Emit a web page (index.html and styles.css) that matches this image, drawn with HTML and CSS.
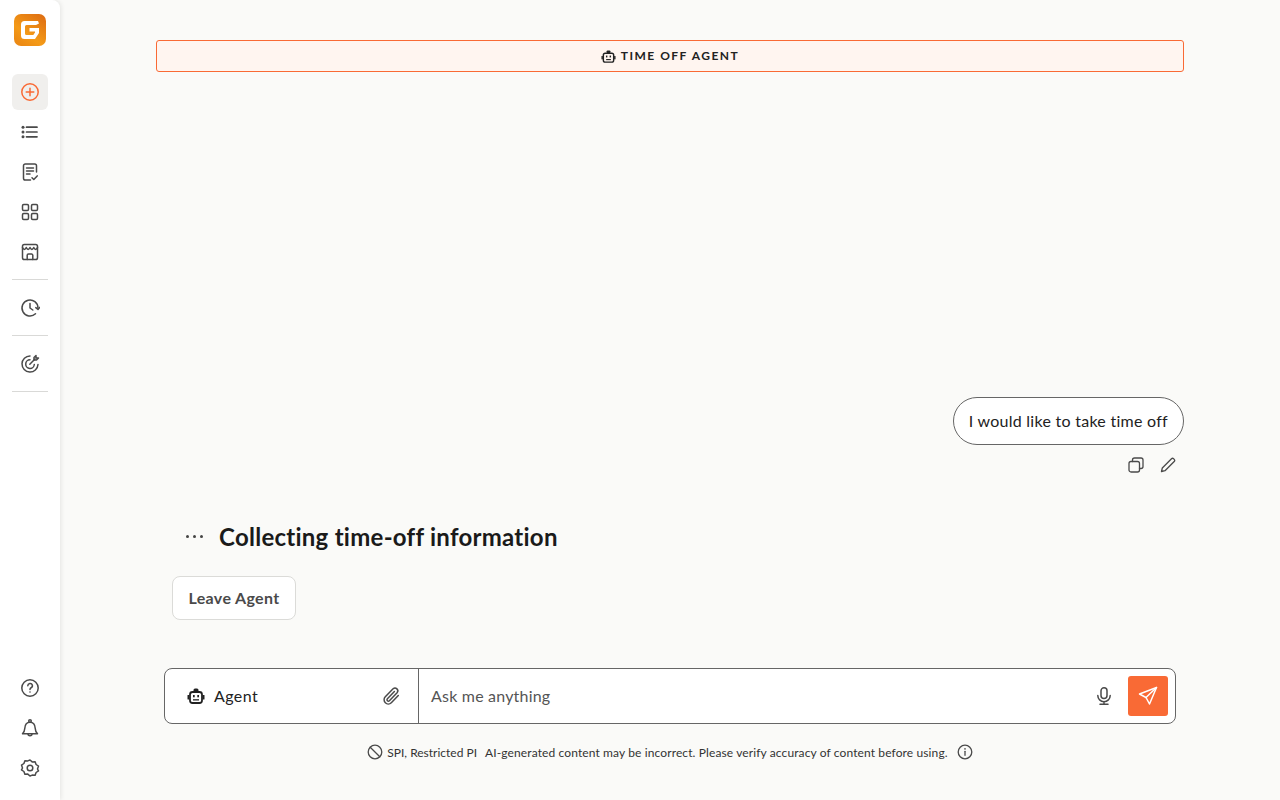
FILE: index.html
```html
<!DOCTYPE html>
<html lang="en">
<head>
<meta charset="utf-8">
<title>Time Off Agent</title>
<link rel="stylesheet" href="styles.css">
</head>
<body>
<div class="app">
  <aside class="sidebar">
    <div class="logo">
      <svg viewBox="0 0 32 32" width="32" height="32">
        <defs><linearGradient id="lg" x1="1" y1="0" x2="0.3" y2="1"><stop offset="0" stop-color="#dc6a12"/><stop offset="0.7" stop-color="#f49a17"/><stop offset="1" stop-color="#ec8a14"/></linearGradient></defs>
        <rect width="32" height="32" rx="7" fill="url(#lg)"/>
        <path d="M25 9.500L24 7H10.500Q7 7 7 10.500V21.500Q7 25 10.500 25H21L25 19V14H15.500V17.500H21V18.500L19.300 21H12.500Q11 21 11 19.500V12.500Q11 11 12.500 11H22Z" fill="#fff"/>
      </svg>
    </div>
    <nav class="nav">
      <a class="nav-item active"><svg class="ico orange" viewBox="0 0 20 20"><circle cx="10" cy="10" r="8.200"/><path d="M10 6.200v7.600M6.200 10h7.600"/></svg></a>
      <a class="nav-item"><svg class="ico" viewBox="0 0 20 20"><path d="M6.500 5.200h10.500M6.500 10h10.500M6.500 14.800h10.500" stroke-width="1.700"/><circle class="dot" cx="3" cy="5.200" r="1.500"/><circle class="dot" cx="3" cy="10" r="1.500"/><circle class="dot" cx="3" cy="14.800" r="1.500"/></svg></a>
      <a class="nav-item"><svg class="ico" viewBox="0 0 20 20"><path d="M16.500 10V3.800A1.800 1.800 0 0 0 14.700 2H5.300a1.800 1.800 0 0 0-1.800 1.800v12.400A1.800 1.800 0 0 0 5.300 18h5.200"/><path d="M6.500 6h7M6.500 9h7M6.500 12h3.500"/><path d="M12 15.700l1.800 1.800 3.400-3.600"/></svg></a>
      <a class="nav-item"><svg class="ico" viewBox="0 0 20 20"><rect x="2.500" y="2.500" width="6" height="6" rx="1.200"/><rect x="11.500" y="2.500" width="6" height="6" rx="1.200"/><rect x="2.500" y="11.500" width="6" height="6" rx="1.200"/><rect x="11.500" y="11.500" width="6" height="6" rx="1.200"/></svg></a>
      <a class="nav-item"><svg class="ico" viewBox="0 0 20 20"><rect x="2.500" y="2.500" width="15" height="15" rx="1.800"/><path d="M2.500 5.500q1.900 3.800 3.750 0q1.900 3.800 3.750 0q1.900 3.800 3.750 0q1.900 3.800 3.750 0"/><path d="M7.200 17.500v-4.200a1.200 1.200 0 0 1 1.200-1.200h3.200a1.200 1.200 0 0 1 1.200 1.200v4.200"/></svg></a>
      <hr class="rule">
      <a class="nav-item"><svg class="ico" viewBox="0 0 20 20"><path d="M18 10A8 8 0 1 0 15.500 15.800"/><path d="M10 5.500V10l2.800 2"/><path d="M15.800 9.600l2.200 1.800 1.700-2"/></svg></a>
      <hr class="rule">
      <a class="nav-item"><svg class="ico" viewBox="0 0 20 20"><path d="M10 2a8 8 0 1 0 8 8.500"/><path d="M10 5.800a4.300 4.300 0 1 0 4.300 4.700"/><path d="M9.800 10.200L15 5"/><path d="M14 3.500v2.500h2.500L18.500 4H16V1.500z" /></svg></a>
      <hr class="rule">
    </nav>
    <div class="nav nav-bottom">
      <a class="nav-item"><svg class="ico" viewBox="0 0 20 20"><circle cx="10" cy="10" r="8.200"/><path d="M7.800 7.700a2.300 2.300 0 1 1 3.300 2.100c-.8.400-1.100.9-1.100 1.600"/><circle class="dot" cx="10" cy="14" r=".8"/></svg></a>
      <a class="nav-item"><svg class="ico" viewBox="0 0 20 20"><path d="M2.500 15.800h15c-1.600-1.600-2.200-3-2.300-5.500C15 6.800 13 4.200 10 4.200S5 6.800 4.800 10.300c-.1 2.500-.7 3.900-2.300 5.500z"/><circle cx="10" cy="3" r="1.300"/><path d="M8 15.800a2 2 0 0 0 4 0"/></svg></a>
      <a class="nav-item"><svg class="ico" viewBox="0 0 20 20"><path d="M10 2l2.200 1.900 2.900-.2 1 2.800 2.400 1.600-1 2.900 1 1.900-2.400 1.600-1 2.800-2.900-.2L10 18l-2.200-1.900-2.900.2-1-2.800-2.400-1.600 1-1.900-1-2.900 2.400-1.600 1-2.800 2.900.2z" stroke-linejoin="round"/><circle cx="10" cy="10" r="2.800"/></svg></a>
    </div>
  </aside>

  <main class="main">
    <div class="banner">
      <svg class="bot-small" viewBox="0 0 16 16"><rect x="2.500" y="4.500" width="11" height="9.500" rx="2" fill="none" stroke="#222" stroke-width="1.500"/><rect x="0.500" y="7.500" width="1.500" height="3.500" fill="#222"/><rect x="14" y="7.500" width="1.500" height="3.500" fill="#222"/><rect x="6" y="1.500" width="4" height="3" rx="1" fill="#222"/><rect x="5.300" y="7" width="1.500" height="2" fill="#222"/><rect x="9.200" y="7" width="1.500" height="2" fill="#222"/><rect x="5.500" y="10.700" width="5" height="1.200" fill="#222"/></svg>
      <span class="banner-label">TIME OFF AGENT</span>
    </div>

    <div class="thread">
      <div class="user-msg">
        <div class="bubble">I would like to take time off</div>
        <div class="msg-actions">
          <svg class="ico small" viewBox="0 0 16 16"><rect x="1" y="4.500" width="10.500" height="10.500" rx="2"/><path d="M4.500 4.500V3a2 2 0 0 1 2-2H13a2 2 0 0 1 2 2v6.500a2 2 0 0 1-2 2h-1.500"/></svg>
          <svg class="ico small" viewBox="0 0 16 16"><path d="M1.500 14.500l.8-3.500L11.500 1.800a1.500 1.500 0 0 1 2.100 0l.6.6a1.500 1.500 0 0 1 0 2.100L5 13.700z" stroke-linejoin="round"/></svg>
        </div>
      </div>

      <div class="status">
        <span class="dots"><i></i><i></i><i></i></span>
        <h2>Collecting time-off information</h2>
      </div>
      <button class="leave">Leave Agent</button>
    </div>

    <div class="composer">
      <div class="composer-left">
        <svg class="bot" viewBox="0 0 18 18"><rect x="3" y="5" width="12" height="11" rx="2.500" fill="none" stroke="#222" stroke-width="1.800"/><rect x="0.500" y="8" width="2" height="4.500" rx=".5" fill="#222"/><rect x="15.500" y="8" width="2" height="4.500" rx=".5" fill="#222"/><rect x="6.500" y="1.500" width="5" height="3.500" rx="1.500" fill="#222"/><rect x="6" y="8" width="1.700" height="2.300" fill="#222"/><rect x="10.300" y="8" width="1.700" height="2.300" fill="#222"/><rect x="6" y="12.200" width="6" height="1.300" fill="#222"/></svg>
        <span class="agent">Agent</span>
        <svg class="ico clip" viewBox="0 0 20 20"><path d="M17.300 9.500l-7 7.200a4.200 4.200 0 0 1-6-5.900l7.800-8a2.800 2.800 0 0 1 4 3.900l-7.700 8a1.400 1.400 0 0 1-2-2l7-7.200"/></svg>
      </div>
      <div class="composer-input">
        <span class="placeholder">Ask me anything</span>
        <svg class="ico mic" viewBox="0 0 20 20"><rect x="7" y="1.800" width="6" height="10.700" rx="3"/><path d="M3.800 9.500a6.200 6.200 0 0 0 12.400 0M10 15.700v2.500M6 18.300h8"/></svg>
        <button class="send"><svg class="ico white" viewBox="0 0 20 20"><path d="M18.500 1.500L1.500 8l6.500 3.500L11.500 18z" stroke-linejoin="round"/><path d="M8 11.500L18.500 1.500"/></svg></button>
      </div>
    </div>

    <div class="footnote">
      <svg class="ico note" viewBox="0 0 16 16"><circle cx="8" cy="8" r="6.800"/><path d="M3.200 3.200l9.600 9.600"/></svg>
      <span class="tag">SPI, Restricted PI</span>
      <span class="disc">AI-generated content may be incorrect. Please verify accuracy of content before using.</span>
      <svg class="ico note info" viewBox="0 0 16 16"><circle cx="8" cy="8" r="6.800"/><path d="M8 7.300v4"/><circle class="dot" cx="8" cy="4.900" r=".8"/></svg>
    </div>
  </main>
</div>
</body>
</html>
```

FILE: styles.css
```css
* { box-sizing: border-box; }
html, body { margin: 0; height: 100%; }
body {
  background: #fafaf8;
  color: #1a1a1a;
  font-family: "Lato", "Noto Sans", sans-serif;
  overflow: hidden;
}
.app { display: flex; height: 800px; }

.sidebar {
  width: 60px;
  flex: none;
  background: #fff;
  border-radius: 0 8px 0 0;
  box-shadow: 1px 0 5px rgba(0, 0, 0, 0.09);
  display: flex;
  flex-direction: column;
  align-items: center;
  padding: 14px 0;
}
.logo { width: 32px; height: 32px; margin-bottom: 28px; }
.logo svg { display: block; }
.nav { display: flex; flex-direction: column; gap: 4px; width: 36px; }
.nav-bottom { margin-top: auto; }
.nav-item {
  width: 36px; height: 36px;
  display: flex; align-items: center; justify-content: center;
  border-radius: 6px;
}
.nav-item.active { background: #f0efed; }
.rule { width: 36px; height: 1px; border: 0; background: #d9d9d7; margin: 5px 0 6px; }

.ico {
  width: 20px; height: 20px; flex: none;
  fill: none;
  stroke: #4a4a4a;
  stroke-width: 1.500;
  stroke-linecap: round;
  stroke-linejoin: round;
}
.ico .dot { fill: #4a4a4a; stroke: none; }
.ico.orange { stroke: #f96a35; }
.ico.white { stroke: #fff; width: 20px; height: 20px; }
.ico.small { width: 16px; height: 16px; stroke-width: 1.300; }
.ico.note { width: 16px; height: 16px; stroke-width: 1.300; }

.main {
  flex: 1;
  min-width: 0;
  padding: 40px 96px 40px;
  display: flex;
  flex-direction: column;
}

.banner {
  height: 32px;
  flex: none;
  display: flex; align-items: center; justify-content: center;
  gap: 5px;
  background: #fff5f0;
  border: 1px solid #f96a35;
  border-radius: 3px;
  font-size: 12px;
  font-weight: 700;
  letter-spacing: 1.500px;
  color: #222;
}
.banner-label { padding-bottom: 2px; }
.bot-small { width: 15px; height: 15px; }

.thread { flex: 1; display: flex; flex-direction: column; justify-content: flex-end; align-items: flex-start; }

.user-msg { align-self: flex-end; display: flex; flex-direction: column; align-items: flex-end; }
.bubble {
  height: 48px;
  display: flex; align-items: center;
  padding: 0 15px 2px;
  background: #fff;
  border: 1px solid #666;
  border-radius: 24px;
  font-size: 16px;
  letter-spacing: .27px;
  color: #222;
  white-space: nowrap;
}
.msg-actions { display: flex; gap: 16px; padding: 12px 8px 0 0; }

.status { display: flex; align-items: center; margin: 46px 0 0 30px; height: 34px; }
.dots { display: flex; gap: 4px; width: 33px; }
.dots i { width: 3px; height: 3px; border-radius: 50%; background: #444; }
.status h2 { margin: 0; font-size: 24px; font-weight: 700; color: #1a1a1a; letter-spacing: .26px; }

.leave {
  margin: 23px 0 48px 16px;
  width: 124px; height: 44px;
  background: #fff;
  border: 1px solid #dbdbd8;
  border-radius: 8px;
  font: 700 16px "Lato", "Noto Sans", sans-serif;
  letter-spacing: .35px;
  color: #4a4a4a;
  padding: 0 0 2px;
}

.composer {
  flex: none;
  margin: 0 8px;
  height: 56px;
  display: flex;
  background: #fff;
  border: 1px solid #666;
  border-radius: 8px;
}
.composer-left {
  width: 254px; flex: none;
  display: flex; align-items: center;
  padding: 0 17px 0 22px;
  border-right: 1px solid #666;
}
.bot { width: 18px; height: 18px; flex: none; }
.agent { margin-left: 9px; font-size: 16px; letter-spacing: .4px; color: #222; flex: 1; padding-bottom: 2px; }
.composer-input { flex: 1; display: flex; align-items: center; padding: 0 7px 0 12px; }
.placeholder { flex: 1; font-size: 16px; letter-spacing: .2px; color: #555; padding-bottom: 2px; }
.mic { margin-right: 14px; }
.send {
  width: 40px; height: 40px; padding: 0;
  display: flex; align-items: center; justify-content: center;
  background: #f96a35;
  border: 0;
  border-radius: 3px;
}

.footnote {
  flex: none;
  height: 16px;
  margin-top: 20px;
  display: flex; align-items: center; justify-content: center;
  font-size: 12px;
  color: #333;
}
.tag { margin-left: 4px; }
.disc { margin-left: 8px; letter-spacing: .115px; }
.info { margin-left: 9px; }
```
